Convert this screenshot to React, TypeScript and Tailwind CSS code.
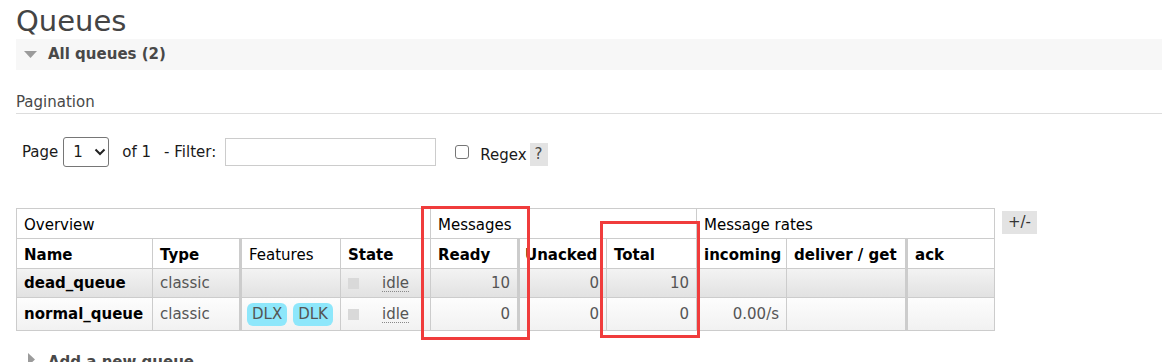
export default function App() {
  const cell = "border border-[#ccc] px-[7px] py-0 text-left align-middle";
  const hcell = "border border-[#ccc] px-[7px] pt-[3px] pb-0 text-left align-middle";
  const num = "border border-[#ccc] px-[7px] py-0 text-right align-middle text-[#555]";
  const row3 = "bg-[linear-gradient(#f3f3f3,#e1e1e1)]";
  const row4 = "bg-[linear-gradient(#fdfdfd,#f1f1f1)]";
  return (
    <div className="relative h-[362px] w-[1162px] overflow-hidden bg-white font-['DejaVu_Sans',sans-serif] text-[#484848]">
      <div className="pl-4">
        <h1 className="pt-[4px] text-[29px] font-normal leading-[35px] text-[#444]">Queues</h1>
        <div className="flex h-[31px] items-center bg-[#f7f7f7]">
          <svg className="ml-[8px]" width="13" height="7" viewBox="0 0 13 7">
            <polygon points="0,0 13,0 6.5,7" fill="#9b9b9b" />
          </svg>
          <span className="ml-[11px] text-[15px] font-bold text-[#484848]">All queues (2)</span>
        </div>
        <div className="mt-[23px] border-b border-[#ddd] pb-[2px] text-[15px] leading-[18px]">Pagination</div>

        <div className="mt-[23px] flex items-start text-[15px] text-[#1a1a1a]">
          <span className="ml-[6px] leading-[30px]">Page</span>
          <div className="ml-[5px] flex h-[30px] w-[46px] items-center rounded-[3px] border border-[#767676] bg-white pl-[9px]">
            <span className="text-[15px] leading-none">1</span>
            <svg className="ml-[11px]" width="12" height="8" viewBox="0 0 12 8">
              <polyline points="1.5,1.5 6,6 10.5,1.5" fill="none" stroke="#222" strokeWidth="2" />
            </svg>
          </div>
          <span className="ml-[13px] leading-[30px]">of 1</span>
          <span className="ml-[13px] leading-[30px]">- Filter:</span>
          <div className="ml-[9px] mt-[1px] h-[28px] w-[211px] border border-[#ccc] bg-white" />
          <div className="ml-[19px] mt-[8px] h-[14px] w-[14px] rounded-[3px] border border-[#767676] bg-white" />
          <span className="ml-[11px] mt-[3px] leading-[30px]">Regex</span>
          <span className="ml-[3px] mt-[6px] flex h-[23px] w-[18px] items-center justify-center bg-[#e3e3e3] text-[15px] text-[#484848]">?</span>
        </div>

        <div className="mt-[38px] flex items-start gap-[7px]">
          <table className="w-[979px] table-fixed border-collapse border border-[#ccc] text-[15px] text-black">
            <colgroup>
              <col className="w-[136px]" />
              <col className="w-[88px]" />
              <col className="w-[100px]" />
              <col className="w-[90px]" />
              <col className="w-[88px]" />
              <col className="w-[88px]" />
              <col className="w-[90px]" />
              <col className="w-[90px]" />
              <col className="w-[120px]" />
              <col className="w-[88px]" />
            </colgroup>
            <thead>
              <tr className="h-[30px]">
                <th colSpan={4} className={`${hcell} font-normal`}>Overview</th>
                <th colSpan={3} className={`${hcell} font-normal`}>Messages</th>
                <th colSpan={3} className={`${hcell} font-normal`}>Message rates</th>
              </tr>
              <tr className="h-[30px]">
                <th className={`${hcell} font-bold`}>Name</th>
                <th className={`${hcell} font-bold`}>Type</th>
                <th className={`${hcell} border-l-[3px] font-normal`}>Features</th>
                <th className={`${hcell} font-bold`}>State</th>
                <th className={`${hcell} font-bold`}>Ready</th>
                <th className={`${hcell} border-l-[3px] !px-[5px] font-bold`}>Unacked</th>
                <th className={`${hcell} font-bold`}>Total</th>
                <th className={`${hcell} font-bold`}>incoming</th>
                <th className={`${hcell} font-bold`}>deliver / get</th>
                <th className={`${hcell} border-l-[3px] font-bold`}>ack</th>
              </tr>
            </thead>
            <tbody>
              <tr className={`h-[29px] ${row3}`}>
                <td className={`${cell} font-bold text-black`}>dead_queue</td>
                <td className={`${cell} text-[#555]`}>classic</td>
                <td className={`${cell} border-l-[3px]`}></td>
                <td className={cell}>
                  <div className="flex items-center">
                    <span className="h-[11px] w-[11px] bg-[#d9d9d9]" />
                    <span className="ml-[23px] border-b border-dotted border-[#888] leading-[16px] text-[#555]">idle</span>
                  </div>
                </td>
                <td className={num}>10</td>
                <td className={`${num} border-l-[3px]`}>0</td>
                <td className={num}>10</td>
                <td className={num}></td>
                <td className={num}></td>
                <td className={`${num} border-l-[3px]`}></td>
              </tr>
              <tr className={`h-[33px] ${row4}`}>
                <td className={`${cell} font-bold text-black`}>normal_queue</td>
                <td className={`${cell} text-[#555]`}>classic</td>
                <td className={`${cell} border-l-[3px] !px-[5px]`}>
                  <div className="flex gap-[6px]">
                    <span className="rounded-[6px] bg-[#8ee7fb] px-[5px] leading-[23px] text-[#555]">DLX</span>
                    <span className="rounded-[6px] bg-[#8ee7fb] px-[5px] leading-[23px] text-[#555]">DLK</span>
                  </div>
                </td>
                <td className={cell}>
                  <div className="flex items-center">
                    <span className="h-[11px] w-[11px] bg-[#d9d9d9]" />
                    <span className="ml-[23px] border-b border-dotted border-[#888] leading-[16px] text-[#555]">idle</span>
                  </div>
                </td>
                <td className={num}>0</td>
                <td className={`${num} border-l-[3px]`}>0</td>
                <td className={num}>0</td>
                <td className={num}>0.00/s</td>
                <td className={num}></td>
                <td className={`${num} border-l-[3px]`}></td>
              </tr>
            </tbody>
          </table>
          <span className="mt-[3px] flex h-[23px] w-[35px] items-center justify-center bg-[#e3e3e3] text-[15px] text-[#333]">+/-</span>
        </div>

        <div className="mt-[22px] flex items-start">
          <svg className="ml-[12px]" width="7" height="13" viewBox="0 0 7 13">
            <polygon points="0,0 7,6.5 0,13" fill="#9b9b9b" />
          </svg>
          <span className="ml-[13px] text-[15px] font-bold leading-[18px] text-[#484848]">Add a new queue</span>
        </div>
      </div>

      <div className="pointer-events-none absolute left-[421px] top-[206px] h-[134px] w-[109px] border-[3px] border-[#f03c3c]" />
      <div className="pointer-events-none absolute left-[600px] top-[221px] h-[117px] w-[100px] border-[3px] border-[#f03c3c]" />
    </div>
  );
}
